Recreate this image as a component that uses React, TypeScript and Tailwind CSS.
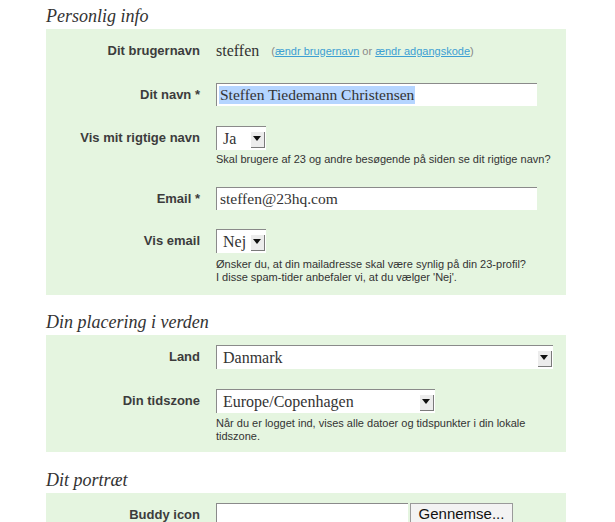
import React from "react";

const serif = "font-['Liberation_Serif','Times_New_Roman',serif]";
const sans = "font-['Liberation_Sans','Helvetica',Arial,sans-serif]";

function Arrow() {
  return (
    <span className="flex h-[16px] w-[14px] items-center justify-center bg-[#ececec] shadow-[1px_1px_0_#7a7a7a,inset_1px_1px_0_#ffffff]">
      <svg width="8" height="5" viewBox="0 0 8 5">
        <path d="M0 0 L8 0 L4 5 Z" fill="#111" />
      </svg>
    </span>
  );
}

function Select({ value, width }: { value: string; width: string }) {
  return (
    <div className={`flex h-[24px] items-center justify-between border-l border-t border-[#8a8a8a] bg-white pl-[6px] pr-[2px] ${width}`}>
      <span className={`${serif} text-[16px] text-[#333]`}>{value}</span>
      <Arrow />
    </div>
  );
}

function TextInput({ children }: { children: React.ReactNode }) {
  return (
    <div className={`flex h-[23px] w-[321px] items-center border-l border-t border-[#8a8a8a] bg-white pl-[2px] ${serif} text-[15.5px] text-[#333]`}>
      {children}
    </div>
  );
}

function Row({ label, h, mt, children }: { label: string; h: string; mt: string; children: React.ReactNode }) {
  return (
    <div className={`flex ${mt}`}>
      <div className={`flex w-[154px] shrink-0 items-center justify-end ${h} ${sans} text-[13px] font-bold text-[#3c3c3c]`}>
        {label}
      </div>
      <div className="ml-[16px]">{children}</div>
    </div>
  );
}

function Help({ children, mt }: { children: React.ReactNode; mt: string }) {
  return <p className={`${mt} ${sans} text-[11px] leading-[13px] text-[#333]`}>{children}</p>;
}

function Heading({ children, mt }: { children: React.ReactNode; mt: string }) {
  return <h2 className={`${mt} mb-[3px] h-[20px] ${serif} text-[18px] italic leading-[20px] text-[#333]`}>{children}</h2>;
}

export default function App() {
  return (
    <div className="h-[522px] w-[615px] overflow-hidden bg-white">
      <div className="ml-[46px] w-[520px]">
        <Heading mt="mt-[6px]">Personlig info</Heading>
        <section className="bg-[#e5f5e0] pb-[11px] pt-[12px]">
          <Row label="Dit brugernavn" h="h-[20px]" mt="">
            <div className="flex h-[20px] items-center">
              <span className={`${serif} text-[16px] text-[#333]`}>steffen</span>
              <span className={`ml-[12px] ${sans} text-[11px] text-[#888]`}>
                (<a className="text-[#3d9fd3] underline">ændr brugernavn</a> or{" "}
                <a className="text-[#3d9fd3] underline">ændr adgangskode</a>)
              </span>
            </div>
          </Row>
          <Row label="Dit navn *" h="h-[23px]" mt="mt-[22px]">
            <TextInput>
              <span className="bg-[#b5d5ff] px-[1px] leading-[18px]">Steffen Tiedemann Christensen</span>
            </TextInput>
          </Row>
          <Row label="Vis mit rigtige navn" h="h-[24px]" mt="mt-[20px]">
            <Select value="Ja" width="w-[50px]" />
            <Help mt="mt-[3px]">Skal brugere af 23 og andre besøgende på siden se dit rigtige navn?</Help>
          </Row>
          <Row label="Email *" h="h-[23px]" mt="mt-[21px]">
            <TextInput>
              <span className="pl-[1px]">steffen@23hq.com</span>
            </TextInput>
          </Row>
          <Row label="Vis email" h="h-[24px]" mt="mt-[19px]">
            <Select value="Nej" width="w-[50px]" />
            <Help mt="mt-[5px]">
              Ønsker du, at din mailadresse skal være synlig på din 23-profil?
              <br />I disse spam-tider anbefaler vi, at du vælger 'Nej'.
            </Help>
          </Row>
        </section>

        <Heading mt="mt-[17px]">Din placering i verden</Heading>
        <section className="bg-[#e5f5e0] pb-[9px] pt-[10px]">
          <Row label="Land" h="h-[24px]" mt="">
            <Select value="Danmark" width="w-[337px]" />
          </Row>
          <Row label="Din tidszone" h="h-[24px]" mt="mt-[20px]">
            <Select value="Europe/Copenhagen" width="w-[219px]" />
            <Help mt="mt-[4px]">
              Når du er logget ind, vises alle datoer og tidspunkter i din lokale
              <br />
              tidszone.
            </Help>
          </Row>
        </section>

        <Heading mt="mt-[18px]">Dit portræt</Heading>
        <section className="bg-[#e5f5e0] pb-[10px] pt-[10px]">
          <Row label="Buddy icon" h="h-[23px]" mt="">
            <div className="flex items-start">
              <div className="h-[23px] w-[192px] border-l border-t border-[#8a8a8a] bg-white" />
              <div className={`ml-[2px] flex h-[22px] w-[103px] items-center justify-center border border-[#9a9a9a] bg-[#f3f3f3] ${sans} text-[15px] text-[#111]`}>
                Gennemse...
              </div>
            </div>
          </Row>
        </section>
      </div>
    </div>
  );
}
